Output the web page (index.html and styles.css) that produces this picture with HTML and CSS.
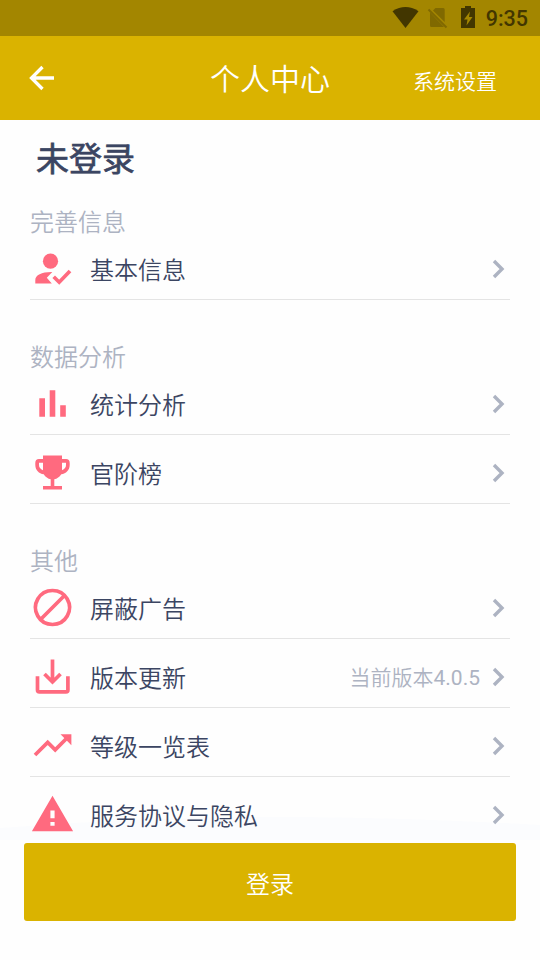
FILE: index.html
```html
<!DOCTYPE html>
<html lang="zh-CN">
<head>
<meta charset="utf-8">
<title>个人中心</title>
<link rel="stylesheet" href="styles.css">
</head>
<body>
<div class="screen">
  <div class="status">
    <svg class="status-icons" width="90" height="36" viewBox="390 0 90 36">
      <path class="dark" d="M392.500 11.200Q405.500 2.800 418.500 11.200L405.500 28Z"/>
      <path class="dim" d="M435.500 8h7.700q1.500 0 1.500 1.500V22L433 10.500ZM430 12.500L444 27H431.500q-1.500 0-1.500-1.500Z"/>
      <path class="dim-line" d="M428.500 9.500L446.500 27.500"/>
      <path class="dark" fill-rule="evenodd" d="M465 6h6v2h4v20h-14V8h4ZM470 11.500L464 19.500h3.500L466.500 25.500L472.500 17h-3.500Z"/>
    </svg>
    <span class="clock">9:35</span>
  </div>
  <header class="bar">
    <svg class="back" width="26" height="26" viewBox="0 0 26 26"><path d="M25 13H3M13.500 2L2.500 13L13.500 24"/></svg>
    <h1>个人中心</h1>
    <span class="settings">系统设置</span>
  </header>
  <main class="content">
    <svg class="wave" viewBox="0 0 540 26" preserveAspectRatio="none"><path d="M0 14Q150 2 300 3Q420 4 540 11V26H0Z"/></svg>
    <h2>未登录</h2>
    <section>
      <h3>完善信息</h3>
      <div class="row">
        <svg class="icon" viewBox="0 0 46 46"><circle cx="20.500" cy="15.200" r="7.600"/><path d="M5.300 37.600V34C5.300 29 12 25.800 22.300 26L16.800 31.700L21.800 37.600Z"/><path class="line" d="M23.700 30.800L29.200 36.200L40 25"/></svg>
        <span class="label">基本信息</span>
        <svg class="chev" viewBox="0 0 14 20"><path d="M2 2L10 10L2 18"/></svg>
      </div>
    </section>
    <section>
      <h3>数据分析</h3>
      <div class="row">
        <svg class="icon" viewBox="0 0 46 46"><path d="M9.300 17.200h5.700v18.500H9.300ZM19.700 9.300h5.600v26.400h-5.600ZM30.200 24.200h5.600v11.500h-5.600Z"/></svg>
        <span class="label">统计分析</span>
        <svg class="chev" viewBox="0 0 14 20"><path d="M2 2L10 10L2 18"/></svg>
      </div>
      <div class="row">
        <svg class="icon" viewBox="0 0 46 46"><path fill-rule="evenodd" d="M13 5.500H32V9H36Q39.700 9 39.700 13V15C39.700 20 36 23.800 31.300 24.300Q28.500 28.500 24.300 29.300V35.900H32V39.500H13V35.900H20.700V29.300Q16.500 28.500 13.700 24.300C9 23.800 5.300 20 5.300 15V13Q5.300 9 9 9H13ZM13 12.700H9V15Q9 18.500 13 20.300ZM32 12.700V20.300Q36 18.500 36 15V12.700Z"/></svg>
        <span class="label">官阶榜</span>
        <svg class="chev" viewBox="0 0 14 20"><path d="M2 2L10 10L2 18"/></svg>
      </div>
    </section>
    <section>
      <h3>其他</h3>
      <div class="row">
        <svg class="icon" viewBox="0 0 46 46"><path class="line" d="M22.500 5.500a17 17 0 1 0 .01 0ZM10.500 34.500L34.500 10.500"/></svg>
        <span class="label">屏蔽广告</span>
        <svg class="chev" viewBox="0 0 14 20"><path d="M2 2L10 10L2 18"/></svg>
      </div>
      <div class="row">
        <svg class="icon" viewBox="0 0 46 46"><path class="line" d="M22.500 5.500V27.500M14.500 20L22.500 28L30.500 20M7.500 22.200V36q0 1.900 1.900 1.900H36q1.900 0 1.900-1.900V22.200"/></svg>
        <span class="label">版本更新</span>
        <span class="version">当前版本<span class="number">4.0.5</span></span>
        <svg class="chev" viewBox="0 0 14 20"><path d="M2 2L10 10L2 18"/></svg>
      </div>
      <div class="row">
        <svg class="icon" viewBox="0 0 46 46"><path class="line" d="M5 32L17.700 19.400L25.200 26.900L37.500 14.500"/><path d="M30.500 11.200H41.400V22.200Z"/></svg>
        <span class="label">等级一览表</span>
        <svg class="chev" viewBox="0 0 14 20"><path d="M2 2L10 10L2 18"/></svg>
      </div>
      <div class="row last">
        <svg class="icon" viewBox="0 0 46 46"><path fill-rule="evenodd" d="M22.500 3.800L43.100 39.300H1.900ZM20.400 18.500V26.200H24.600V18.500ZM20.400 30V33.800H24.600V30Z"/></svg>
        <span class="label">服务协议与隐私</span>
        <svg class="chev" viewBox="0 0 14 20"><path d="M2 2L10 10L2 18"/></svg>
      </div>
    </section>
  </main>
  <button class="login">登录</button>
</div>
</body>
</html>
```
FILE: styles.css
```css
* { box-sizing: border-box; }
body { margin: 0; background: #fefefe; font-family: Roboto, "Noto Sans CJK SC", sans-serif; font-weight: 350; color: #3b4562; }
h1, h2, h3 { margin: 0; font-weight: 350; }
.screen { position: relative; z-index: 0; width: 540px; height: 960px; overflow: hidden; display: flex; flex-direction: column; background: #fefefe; }
.status { height: 36px; flex: none; background: #a38600; display: flex; justify-content: flex-end; align-items: center; padding-right: 12px; gap: 6px; }
.status-icons { flex: none; }
.dark { fill: #423600; }
.dim { fill: #806900; }
.dim-line { stroke: #806900; stroke-width: 2; }
.clock { font-size: 21.5px; font-weight: 500; line-height: 36px; padding-top: 2px; color: #423600; }
.bar { height: 84px; flex: none; background: #dab300; color: #fff; display: grid; grid-template-columns: 180px 180px 180px; align-items: center; }
.back { margin-left: 29px; fill: none; stroke: #fff; stroke-width: 3.3; }
.bar h1 { font-size: 30px; line-height: 44px; padding-top: 4px; text-align: center; }
.settings { font-size: 21px; line-height: 30px; padding: 8px 0 0 53px; }
.content { position: relative; height: 720px; flex: none; padding: 0 30px; overflow: hidden; }
.wave { position: absolute; left: 0; bottom: 0; width: 540px; height: 26px; z-index: -1; fill: #fbfcfe; }
.content h2 { font-size: 33px; font-weight: 400; line-height: 48px; height: 75px; padding: 16px 0 0 6px; -webkit-text-stroke: 0.7px #3b4562; }
h3 { font-size: 24px; line-height: 40px; color: #adb3c2; height: 36px; margin-top: 8px; }
section { margin-bottom: 38px; }
.row { height: 61px; border-bottom: 1px solid #e4e4e4; display: flex; align-items: center; }
.row + .row { margin-top: 8px; }
.icon { width: 46px; height: 46px; flex: none; fill: #ff6a7f; }
.icon .line { fill: none; stroke: #ff6a7f; stroke-width: 3.7; }
.label { margin-left: 14px; font-size: 24px; line-height: 36px; padding-top: 4px; white-space: nowrap; }
.version { margin-left: auto; margin-right: 12px; font-size: 21px; line-height: 30px; padding-top: 2px; color: #adb3c2; }
.number { font-weight: 400; }
.chev { width: 14px; height: 20px; flex: none; margin-left: auto; margin-right: 4px; fill: none; stroke: #adb3c2; stroke-width: 3.4; }
.version + .chev { margin-left: 0; }
.last { border-color: transparent; }
.login { width: 492px; height: 78px; flex: none; margin: 3px 24px 0; border: 0; border-radius: 3px; background: #dab300; color: #fff; font: 350 24px/36px Roboto, "Noto Sans CJK SC", sans-serif; padding: 5px 0 0; }
```
